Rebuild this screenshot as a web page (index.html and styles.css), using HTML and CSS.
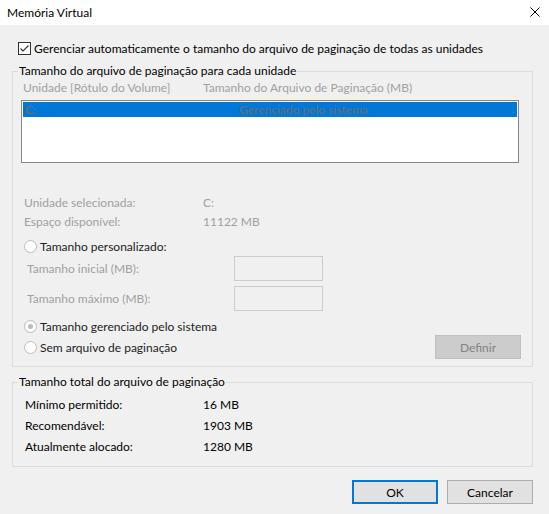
FILE: index.html
```html
<!DOCTYPE html>
<html lang="pt-BR">
<head>
<meta charset="utf-8">
<title>Memória Virtual</title>
<link rel="stylesheet" href="styles.css">
</head>
<body>
<div class="window">
  <div class="titlebar">
    <span class="title">Memória Virtual</span>
    <svg class="close" width="10" height="10" viewBox="0 0 10 10"><path d="M0.5 0.5L9.5 9.5M9.5 0.5L0.5 9.5" stroke="#000" stroke-width="1" fill="none"/></svg>
  </div>
  <div class="main">
    <label class="check-row">
      <span class="checkbox"><svg width="11" height="11" viewBox="0 0 11 11"><path d="M1.5 5.5L4 8L9.5 2.5" stroke="#333" stroke-width="1.1" fill="none"/></svg></span>
      <span>Gerenciar automaticamente o tamanho do arquivo de paginação de todas as unidades</span>
    </label>

    <fieldset class="group group-drive">
      <legend>Tamanho do arquivo de paginação para cada unidade</legend>
      <div class="col-headers">
        <span class="col-drive">Unidade [Rótulo do Volume]</span>
        <span>Tamanho do Arquivo de Paginação (MB)</span>
      </div>
      <div class="listbox">
        <div class="list-row selected">
          <span class="cell-drive">C:</span>
          <span>Gerenciado pelo sistema</span>
        </div>
      </div>
      <div class="info first"><span>Unidade selecionada:</span><span>C:</span></div>
      <div class="info"><span>Espaço disponível:</span><span>11122 MB</span></div>

      <div class="radio-row personal"><span class="radio"></span><span>Tamanho personalizado:</span></div>
      <div class="field-row"><span class="field-label">Tamanho inicial (MB):</span><span class="textbox"></span></div>
      <div class="field-row second"><span class="field-label">Tamanho máximo (MB):</span><span class="textbox"></span></div>

      <div class="radio-row managed"><span class="radio checked"></span><span>Tamanho gerenciado pelo sistema</span></div>
      <div class="radio-row last"><span class="radio"></span><span>Sem arquivo de paginação</span><button class="btn disabled" type="button">Definir</button></div>
    </fieldset>

    <fieldset class="group group-total">
      <legend>Tamanho total do arquivo de paginação</legend>
      <div class="stat first"><span>Mínimo permitido:</span><span>16 MB</span></div>
      <div class="stat"><span>Recomendável:</span><span>1903 MB</span></div>
      <div class="stat"><span>Atualmente alocado:</span><span>1280 MB</span></div>
    </fieldset>

    <div class="actions">
      <button class="btn default" type="button">OK</button>
      <button class="btn" type="button">Cancelar</button>
    </div>
  </div>
</div>
</body>
</html>
```
FILE: styles.css
```css
html, body {
  margin: 0;
  padding: 0;
}
body {
  background: #f0f0f0;
  font-family: Lato, "Noto Sans", sans-serif;
  font-size: 12px;
  color: #000;
}
.window {
  width: 549px;
  height: 514px;
  background: #f0f0f0;
  overflow: hidden;
}
.titlebar {
  height: 25px;
  background: #fff;
  display: flex;
  align-items: center;
  justify-content: space-between;
  padding: 0 9px 0 7px;
  box-sizing: border-box;
}
.title {
  line-height: 16px;
}
.close {
  display: block;
  margin-top: -1px;
}
.main {
  padding: 15px 16px 0 12px;
}
.check-row {
  display: flex;
  align-items: center;
  height: 16px;
  margin-left: 6px;
}
.checkbox {
  width: 13px;
  height: 13px;
  box-sizing: border-box;
  border: 1px solid #333;
  background: #fff;
  margin-right: 3px;
  display: flex;
}
.checkbox svg {
  display: block;
}
.group {
  margin: 7px 0 0;
  padding: 0 0 7px;
  border: 1px solid #dcdcdc;
  min-inline-size: 0;
}
.group legend {
  margin-left: 5px;
  padding: 0 1px;
  line-height: 16px;
}
.col-headers {
  display: flex;
  margin: 1px 0 0 10px;
  height: 16px;
  line-height: 16px;
  color: #a0a0a0;
}
.col-drive {
  width: 180px;
}
.listbox {
  margin: 4px 13px 0 8px;
  height: 63px;
  border: 1px solid #828790;
  background: #fff;
  padding: 1px;
  box-sizing: border-box;
}
.list-row {
  height: 15px;
  line-height: 15px;
  display: flex;
  padding-left: 2px;
}
.list-row.selected {
  background: #0078d7;
  color: #6d6d6d;
}
.cell-drive {
  width: 214px;
}
.info {
  display: grid;
  grid-template-columns: 179px auto;
  align-items: center;
  height: 19px;
  margin-left: 11px;
  color: #a0a0a0;
}
.info.first {
  margin-top: 30px;
}
.radio-row {
  display: flex;
  align-items: center;
  margin-left: 11px;
  height: 19px;
  color: #222;
}
.radio-row.personal {
  margin-top: 6px;
}
.radio-row.managed {
  margin-top: 6px;
  height: 18px;
}
.radio-row.last {
  height: 24px;
  margin-right: 11px;
}
.radio {
  width: 13px;
  height: 13px;
  box-sizing: border-box;
  border: 1px solid #bcbcbc;
  border-radius: 50%;
  background: #fff;
  margin-right: 3px;
  display: flex;
  align-items: center;
  justify-content: center;
}
.radio.checked::after {
  content: "";
  width: 5px;
  height: 5px;
  border-radius: 50%;
  background: #bcbcbc;
}
.field-row {
  display: flex;
  align-items: center;
  height: 25px;
  margin-left: 14px;
  color: #a0a0a0;
}
.field-row.second {
  margin-top: 5px;
}
.field-label {
  width: 207px;
}
.textbox {
  width: 89px;
  height: 25px;
  box-sizing: border-box;
  border: 1px solid #cccccc;
}
.btn {
  width: 86px;
  height: 24px;
  box-sizing: border-box;
  border: 1px solid #adadad;
  background: #e1e1e1;
  font: inherit;
  color: #000;
  padding: 0;
  margin: 0;
}
.btn.disabled {
  background: #cccccc;
  border-color: #bfbfbf;
  color: #838383;
  margin-left: auto;
}
.btn.default {
  border: 2px solid #0078d7;
}
.group-total {
  margin-top: 7px;
  padding-bottom: 9px;
}
.stat {
  display: grid;
  grid-template-columns: 178px auto;
  align-items: center;
  height: 21px;
  margin-left: 12px;
}
.stat.first {
  margin-top: 4px;
}
.actions {
  display: flex;
  justify-content: flex-end;
  gap: 9px;
  margin-top: 13px;
}
```
